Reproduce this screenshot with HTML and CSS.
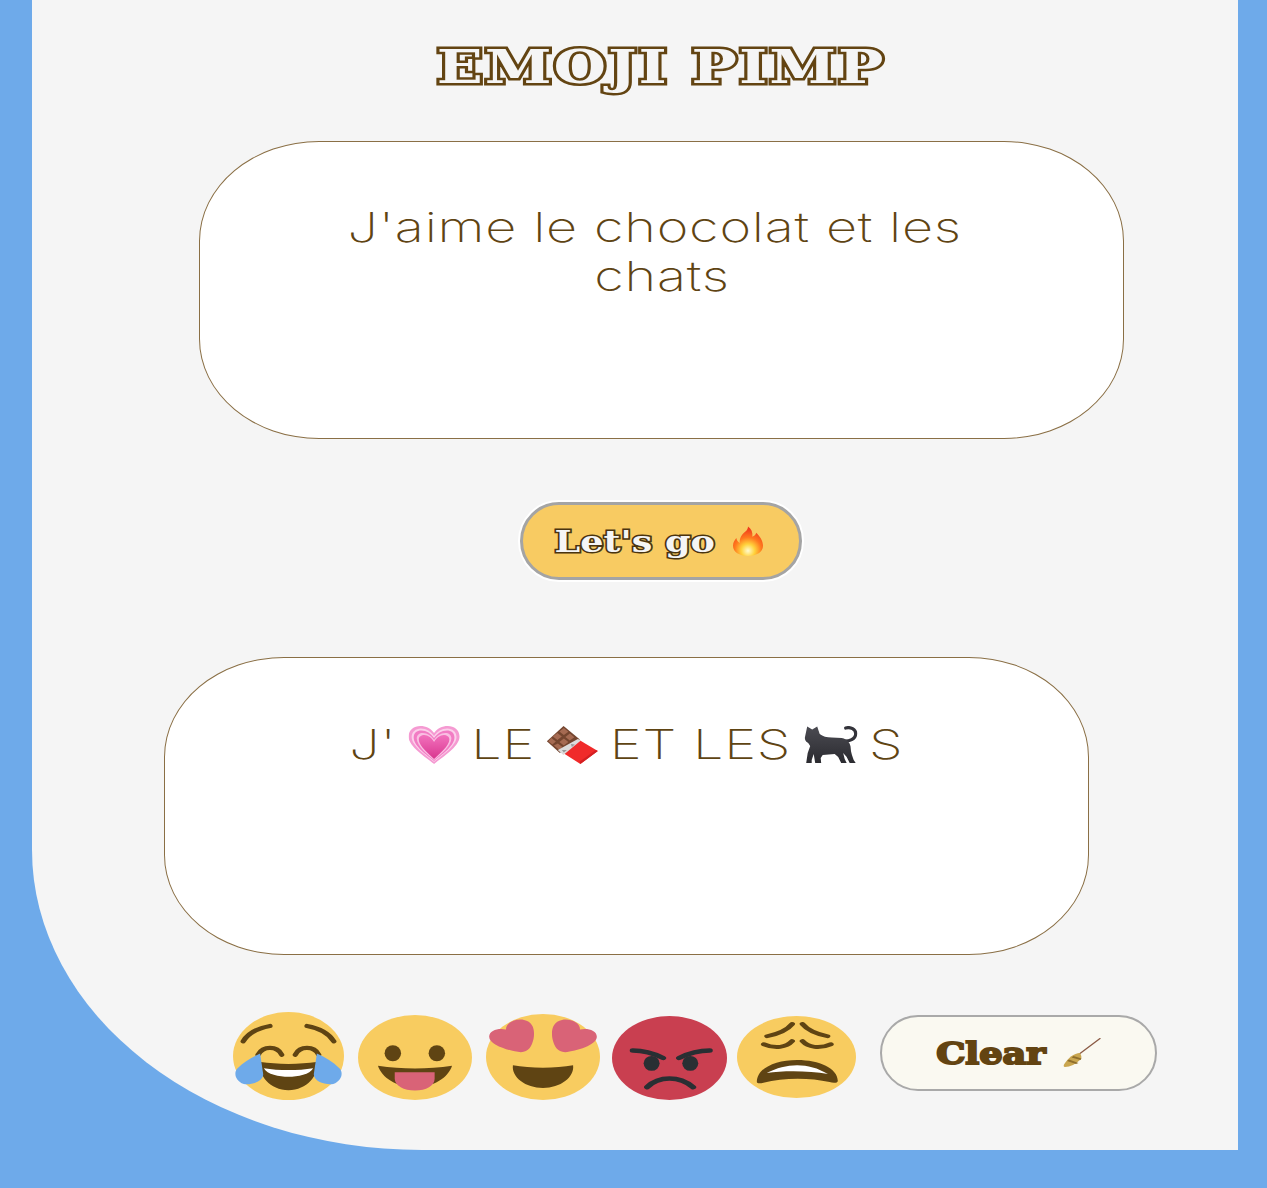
FILE: index.html
```html
<!DOCTYPE html>
<html lang="en">
<head>
<meta charset="utf-8">
<title>Emoji Pimp</title>
<link rel="stylesheet" href="styles.css">
</head>
<body>
<main class="card">
  <h1 class="title">EMOJI PIMP</h1>
  <div class="box box-input"><div class="wide wide-input"><span class="first-line">J'aime le chocolat et les</span> chats</div></div>
  <button class="btn btn-go"><span class="btn-text">Let's go</span>
    <svg class="go-icon" viewBox="0 0 34 32">
      <defs>
        <radialGradient id="fl" cx="50%" cy="82%" r="75%">
          <stop offset="0" stop-color="#fffbd0"/><stop offset=".3" stop-color="#ffd23c"/><stop offset=".6" stop-color="#ff7a1e"/><stop offset="1" stop-color="#f0391c"/>
        </radialGradient>
      </defs>
      <path fill="url(#fl)" d="M17 31C8 31 1.500 27 1.500 20.500 1.500 16.500 3.500 14.500 5 12.500 5.500 15 6.500 16.500 8.500 17.500 8 12 11 8.500 14 6 16 4.500 17 2.500 17 .5 20.500 3 22 6.500 21.500 11 23.500 10.500 25 9 25.500 7 29 10.500 32.500 15 32.500 20.500 32.500 27 26 31 17 31Z"/>
    </svg>
  </button>
  <div class="box box-output">
    <div class="wide wide-output">
      <span>J'</span>
      <svg class="em em-heart" viewBox="0 0 50 38" preserveAspectRatio="none">
        <defs>
          <linearGradient id="hc" x1="0" y1="0" x2="0" y2="1">
            <stop offset="0" stop-color="#f272bd"/><stop offset="1" stop-color="#d9368f"/>
          </linearGradient>
        </defs>
        <path fill="#f59ad2" d="M25 38C17 31 0 21 0 10.500 0 4 5.500 0 11.500 0 17 0 22 2.500 25 7 28 2.500 33 0 38.500 0 44.500 0 50 4 50 10.500 50 21 33 31 25 38Z"/>
        <path fill="#fbd0ea" d="M25 36C18 30 3 20 3 11 3 6 7 2.500 12 2.500 17.500 2.500 22 5.500 25 10 28 5.500 32.500 2.500 38 2.500 43 2.500 47 6 47 11 47 20 32 30 25 36Z"/>
        <path fill="#f27cc4" d="M25 35C18 29 5 20 5 11.500 5 7 8 4.500 12.500 4.500 17.500 4.500 22 7.500 25 12 28 7.500 32.500 4.500 37.500 4.500 42 4.500 45 7 45 11.500 45 20 32 29 25 35Z"/>
        <path fill="#f9bfe2" d="M25 34C19 29 8 20 8 12.500 8 9 10.500 7 14 7 18.500 7 22.500 10 25 14 27.500 10 31.500 7 36 7 39.500 7 42 9 42 12.500 42 20 31 29 25 34Z"/>
        <path fill="url(#hc)" d="M25 33C20 28 10 20 10 13.500 10 10.500 12.500 9 15.500 9 19 9 23 12 25 16 27 12 31 9 34.500 9 37.500 9 40 10.500 40 13.500 40 20 30 28 25 33Z"/>
      </svg>
      <span>LE</span>
      <svg class="em em-choc" viewBox="0 0 51 38" preserveAspectRatio="none">
        <path fill="#f02a2a" d="M31.600 13.600 51 25 33.500 38 16.700 27.200Z"/>
        <path fill="#d41f22" d="M51 25 33.500 38 33 35.500 49 24Z"/>
        <path fill="#74452f" d="M16.700 0 33 13.600 13 27 0 15.300Z"/>
        <path fill="#a56a52" d="M17 2 21.500 5.800 17 9 12.500 5.500ZM10.500 7 15 10.500 10.500 14 6 10.500ZM4.500 12 9 15.500 5.500 18.500 1.500 15.300ZM23 7.500 27.500 11.300 23 14.500 18.500 11ZM17 12.500 21.500 16 17 19.500 12.500 16ZM11 17.500 15.500 21 12.500 24 7 19.500Z"/>
        <path fill="#dcdcdc" d="M11 24 31 13 34 14.500 16.500 29Z"/>
        <path fill="#9a9a9a" d="M15 24 20 24 17 26.500ZM24 18 28 18.500 25 21Z"/>
      </svg>
      <span>ET LES</span>
      <svg class="em em-cat" viewBox="0 0 54 38" preserveAspectRatio="none">
        <defs>
          <linearGradient id="ct" x1="0" y1="0" x2="0" y2="1">
            <stop offset="0" stop-color="#4b4b52"/><stop offset="1" stop-color="#2b2b30"/>
          </linearGradient>
        </defs>
        <path fill="none" stroke="#33333a" stroke-width="3.200" stroke-linecap="round" d="M38 15C46 16 52 13 52 7.500 52 3.500 47 .5 42 2"/>
        <path fill="url(#ct)" d="M1.500 10 3.500 .5 8.500 3.500 13.500 .5 16 8C19 10.500 23 11.500 28 11.500L38 12C44 13 47 18 47 22 47 26 49 31 50 34L52 37 46 37 43 31 39.500 27 41 33 43 37 37.500 37 34.500 31 31 28 19 29 17 32 17.500 37 11.500 37 10.500 31 10 28 8 34 8 37 2.500 37 4 27 6.500 20 4.500 17C1.500 15.500 .5 12.500 1.500 10Z"/>
      </svg>
      <span>S</span>
    </div>
  </div>
  <div class="tray">
    <svg class="face f-joy" viewBox="0 0 36 36" preserveAspectRatio="none">
      <circle cx="18" cy="18" r="18" class="yellow"/>
      <path class="line thick" d="M3.300 12C5 8.500 8.500 6.500 12 5.700M24 5.700C27.500 6.500 31 8.500 32.700 12M8.100 17.500C9 15.500 10.500 14.700 12 14.700S15 15.500 15.800 17.500M20.200 17.500C21 15.500 22.500 14.700 24 14.700S27 15.500 27.800 17.500"/>
      <path class="dark" d="M9 20.500C14 21.500 22 21.500 27 20.500 28 26 24 32 18 32S8 26 9 20.500Z"/>
      <path class="white" d="M10 23C15 24 21 24 26 23 25 25.500 21 26.500 18 26.500S11 25.500 10 23Z"/>
      <path class="blue" d="M8.800 17 9.800 25.500C9.800 28.500 6 30 3.500 29.500 .5 28 .2 24.500 1.500 23 3.500 20.500 6 18.500 8.800 17ZM27.200 17 26.200 25.500C26.200 28.500 30 30 32.500 29.500 35.500 28 35.800 24.500 34.500 23 32.500 20.500 30 18.500 27.200 17Z"/>
    </svg>
    <svg class="face f-tongue" viewBox="0 0 36 36" preserveAspectRatio="none">
      <circle cx="18" cy="18" r="18" class="yellow"/>
      <ellipse cx="11" cy="16.200" rx="2.600" ry="3.400" class="dark"/>
      <ellipse cx="24.900" cy="16.200" rx="2.600" ry="3.400" class="dark"/>
      <path class="dark" d="M6.300 21.500C14 23 22 23 29.700 21.500 28.500 26.500 24 30.500 18 30.500S7.500 26.500 6.300 21.500Z"/>
      <path class="pink" d="M11.600 24.200H24.200V27C24.200 30 21.500 32 18 32S11.600 30 11.600 27Z"/>
    </svg>
    <svg class="face f-love" viewBox="0 0 36 36" preserveAspectRatio="none">
      <circle cx="18" cy="18" r="18" class="yellow"/>
      <path class="dark" d="M8.500 21.500C14 22.800 22 22.800 27.500 21.500 28 26.500 23.500 31 18 31S8 26.500 8.500 21.500Z"/>
      <path class="pink" d="M11 16C7.500 15.500 1 13 1 9.500 1 6.800 4 5.800 6.300 6.500 6.300 3.500 9.500 1.800 12 2.500 15 3.200 15.500 7 15 10.500 14.500 13.500 13.500 16 11 16ZM25 16C28.500 15.500 35 13 35 9.500 35 6.800 32 5.800 29.700 6.500 29.700 3.500 26.500 1.800 24 2.500 21 3.200 20.500 7 21 10.500 21.500 13.500 22.500 16 25 16Z"/>
    </svg>
    <svg class="face f-angry" viewBox="0 0 36 36" preserveAspectRatio="none">
      <circle cx="18" cy="18" r="18" class="red"/>
      <ellipse cx="12.400" cy="20.300" rx="2.500" ry="3.200" class="ink"/>
      <ellipse cx="24.500" cy="20.300" rx="2.500" ry="3.200" class="ink"/>
      <path class="line ink-line" d="M6.500 14.800C10 14.800 13 16 16 18M30.600 14.800C27 14.800 24 16 21 18M11 30.500C13 27.800 15.500 26.800 18 26.800S23 27.800 25.400 30.500"/>
    </svg>
    <svg class="face f-weary" viewBox="0 0 36 36" preserveAspectRatio="none">
      <circle cx="18" cy="18" r="18" class="yellow"/>
      <path class="line thick" d="M9.100 8.900C12 8 15 6.500 16.700 3.500M27.400 8.900C24.500 8 21.500 6.500 19.800 3.500M8.100 12.400C11.500 14.500 15 13.800 16.700 11M28.400 12.400C25 14.500 21.500 13.800 19.800 11"/>
      <path class="dark" d="M6 29C6 23 11.500 19.300 18.200 19.300S30.500 23 30.500 28.500C30.500 29.500 29 29.500 28 29 22 27 14 27 8 29.300 7 29.700 6 29.700 6 29Z"/>
      <path class="white" d="M9 25C12 22.800 15 21.600 18.200 21.600S24.500 22.800 27.500 25.500C22 24 14 24 9 25Z"/>
    </svg>
    <button class="btn btn-clear"><span class="btn-text">Clear</span>
      <svg class="clear-icon" viewBox="0 0 38 30">
        <path stroke="#8a5a44" stroke-width="1.300" stroke-linecap="round" d="M37 .5 15 17"/>
        <path fill="#c9a64f" d="M17 15C18 17 19 19 18 21 13 26 7 29 2 29 .5 29 .5 27.500 1 26.500 5 20 11 15 17 15Z"/>
        <path fill="#8f6f2c" d="M6 21.500 15.500 25 13 26 4 23ZM10.500 18 18.500 20.500 17.500 22 8.500 19.500Z"/>
      </svg>
    </button>
  </div>
</main>
</body>
</html>
```

FILE: styles.css
```css
* {
  box-sizing: border-box;
}

html,
body {
  margin: 0;
  height: 100%;
}

body {
  background: #6eaaea;
  padding: 0 29px 38px 32px;
  color: #5f4413;
  font-family: Inter, "Liberation Sans", sans-serif;
}

.card {
  height: 1150px;
  background: #f5f5f5;
  border-bottom-left-radius: 390px 300px;
  display: flex;
  flex-direction: column;
  overflow: hidden;
}

.title {
  margin: 38px 0 0 52px;
  height: 64px;
  text-align: center;
  font-family: "DejaVu Serif", serif;
  font-weight: 700;
  font-size: 47px;
  line-height: 58px;
  letter-spacing: 1.500px;
  color: #f5f5f5;
  -webkit-text-stroke: 5px #634412;
  paint-order: stroke fill;
  transform: scaleX(1.285);
}

.box {
  width: 925px;
  height: 298px;
  background: #fff;
  border: 1px solid #8a6f45;
  border-radius: 120px / 100px;
  display: flex;
  justify-content: center;
  padding-top: 61px;
}

.wide {
  font-size: 41px;
  font-weight: 200;
  line-height: 49px;
  letter-spacing: 0.600px;
  text-align: center;
  transform: scaleX(1.317);
}

.wide-input {
  width: 490px;
}

.first-line {
  display: inline-block;
  padding-right: 11px;
}

.wide-output {
  display: flex;
  align-items: flex-start;
  gap: 9px;
  height: 49px;
}

.box-input {
  margin: 39px 0 0 167px;
}

.box-output {
  margin: 77px 0 0 132px;
  padding-top: 62px;
}

.em {
  flex: none;
  height: 38px;
  margin-top: 6px;
}

.em-heart,
.em-choc {
  width: 38.700px;
}

.em-cat {
  width: 41px;
}

.btn {
  display: flex;
  align-items: center;
  justify-content: center;
  border-radius: 40px;
  font-family: "DejaVu Serif", serif;
  font-weight: 700;
  font-size: 30px;
  padding: 0;
}

.btn-text {
  display: block;
  transform: scaleX(1.22);
  paint-order: stroke fill;
}

.btn-go {
  width: 282px;
  height: 78px;
  margin: 63px 0 0 488px;
  padding-left: 12px;
  gap: 30px;
  background: #f8cb62;
  border: 3px solid #a4a4a4;
  box-shadow: 0 0 0 2px #fff;
  color: #f5f5f5;
  -webkit-text-stroke: 3px #4a3410;
}

.go-icon {
  width: 34px;
  height: 31px;
}

.tray {
  display: flex;
  align-items: center;
  margin: 57px 0 0 201px;
}

.face {
  flex: none;
}

.f-joy {
  width: 111px;
  height: 88px;
  margin-right: 14px;
}

.f-tongue {
  width: 114px;
  height: 85px;
  margin: 2px 14px 0 0;
}

.f-love {
  width: 114px;
  height: 86px;
  margin: 2px 12px 0 0;
}

.f-angry {
  width: 115px;
  height: 84px;
  margin: 4px 10px 0 0;
}

.f-weary {
  width: 119px;
  height: 82px;
  margin: 2px 24px 0 0;
}

.yellow {
  fill: #f8cc60;
}

.red {
  fill: #c93f50;
}

.dark {
  fill: #5f4413;
}

.ink {
  fill: #292f33;
}

.white {
  fill: #fff;
}

.blue {
  fill: #6eaaea;
}

.pink {
  fill: #d96377;
}

.line {
  fill: none;
  stroke-linecap: round;
}

.thick {
  stroke: #5f4413;
  stroke-width: 1.700;
}

.ink-line {
  stroke: #292f33;
  stroke-width: 1.900;
}

.btn-clear {
  width: 277px;
  height: 76px;
  margin-bottom: 6px;
  padding-left: 10px;
  gap: 28px;
  background: #faf9f1;
  border: 2px solid #a9a9a9;
  color: #634412;
  -webkit-text-stroke: 2px #634412;
}

.clear-icon {
  width: 38px;
  height: 30px;
}
```
